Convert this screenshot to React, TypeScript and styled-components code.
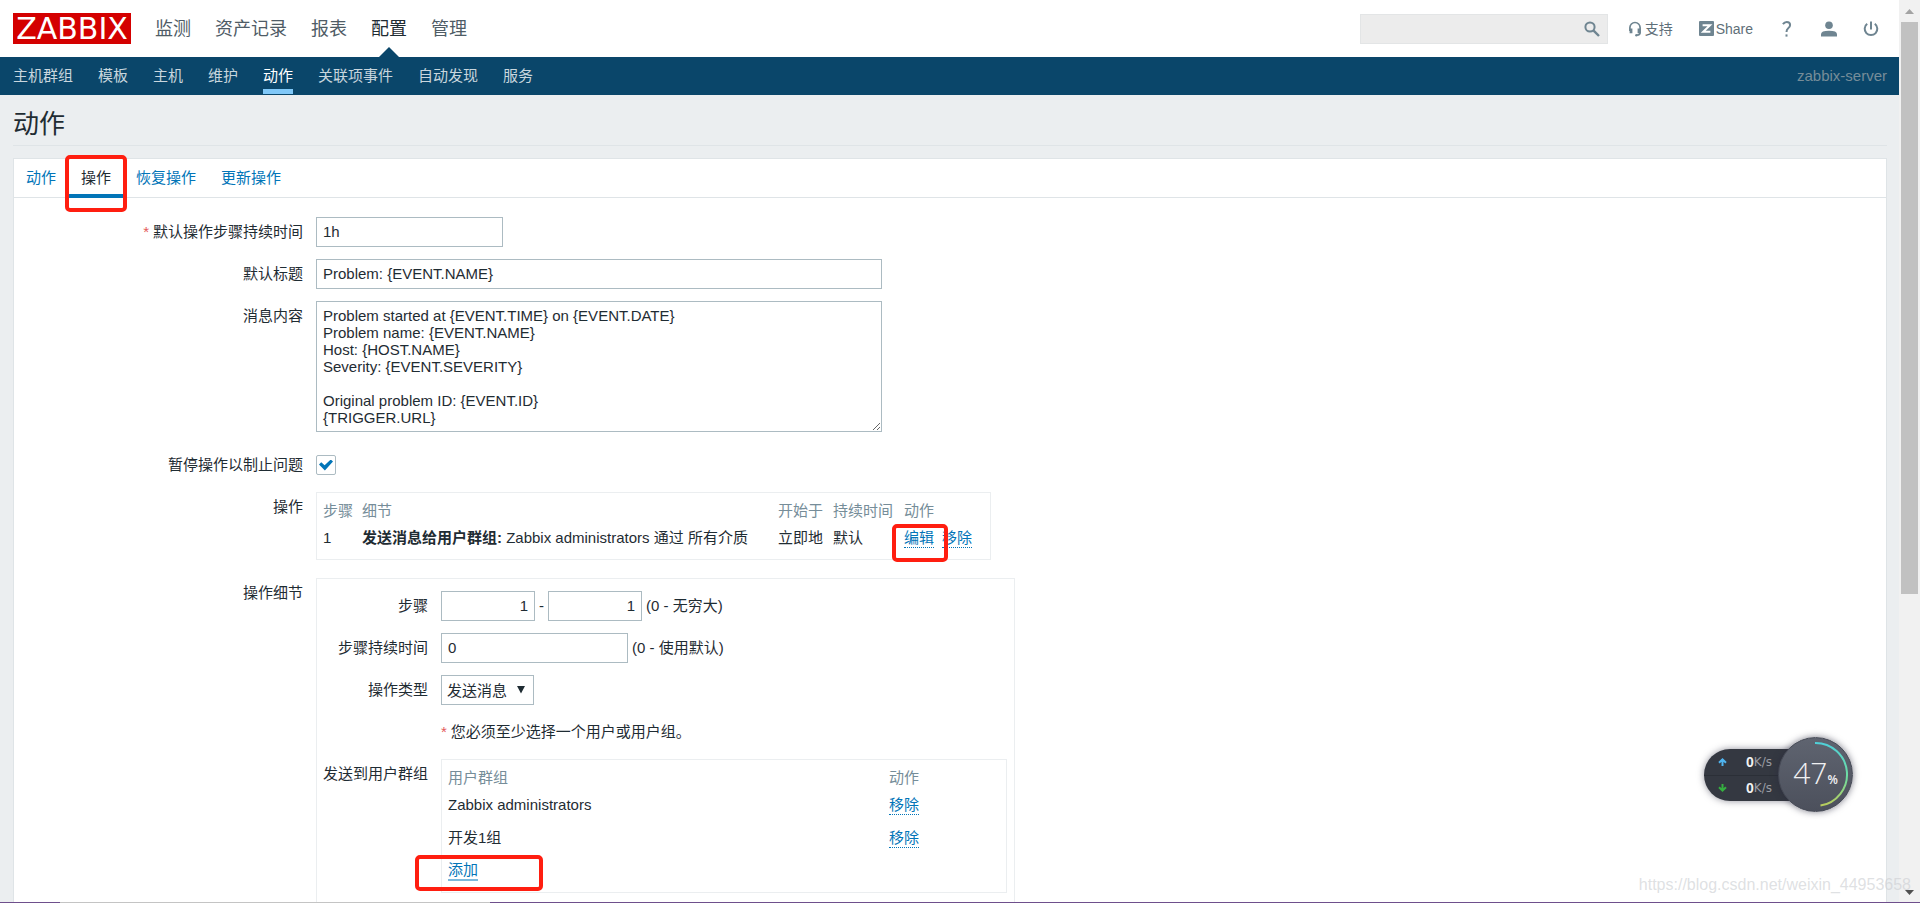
import React from "react";
import styled, { createGlobalStyle, css } from "styled-components";

const color = {
  text: "#1f2c33",
  muted: "#768d99",
  link: "#0275b8",
  nav: "#0a466a",
  page: "#ebeef0",
  line: "#dfe4e7",
  box: "#ebeef0",
  field: "#acbbc2",
  mark: "#ff1e10",
};

const GlobalStyle = createGlobalStyle`
  *, *::before, *::after { box-sizing: border-box; }
  body {
    margin: 0;
    background: ${color.page};
    color: ${color.text};
    font: 15px/20px "Liberation Sans", "Noto Sans CJK SC", sans-serif;
  }
  button, input, textarea, select { font: inherit; color: inherit; }
  a { color: inherit; text-decoration: none; }
  ul { margin: 0; padding: 0; list-style: none; }
`;

const Shell = styled.div`
  display: flex;
  height: 100vh;
  overflow: hidden;
  position: relative;
`;

const Page = styled.div`
  flex: 1;
  min-width: 0;
  display: flex;
  flex-direction: column;
`;

/* ---------- header ---------- */

const TopBar = styled.header`
  flex: none;
  display: flex;
  align-items: center;
  height: 57px;
  padding: 0 20px 0 13px;
  background: #fff;
`;

const Logo = styled.a`
  display: block;
  width: 118px;
  height: 31px;
  margin-right: 24px;
  background: #d40000;
  color: #fff;
  font: 30px/32px "DejaVu Sans", sans-serif;
  text-align: center;
`;

const MainMenu = styled.ul`
  display: flex;
  gap: 24px;
  flex: 1;
`;

const MainLink = styled.a<{ $active?: boolean }>`
  display: block;
  position: relative;
  height: 57px;
  font-size: 18px;
  line-height: 59px;
  color: ${(p) => (p.$active ? color.text : "#4f5c66")};
  ${(p) =>
    p.$active &&
    css`
      &::after {
        content: "";
        position: absolute;
        left: 50%;
        bottom: 0;
        margin-left: -10px;
        border: 10px solid transparent;
        border-top: 0;
        border-bottom-color: ${color.nav};
      }
    `}
`;

const Search = styled.form`
  display: flex;
  align-items: center;
  width: 248px;
  height: 30px;
  margin-right: 20px;
  padding-right: 7px;
  border: 1px solid #e3e5e6;
  background: #ececec;
`;

const SearchInput = styled.input`
  flex: 1;
  min-width: 0;
  border: 0;
  background: none;
  outline: 0;
`;

const IconButton = styled.button`
  display: flex;
  width: 16px;
  height: 16px;
  padding: 0;
  border: 0;
  background: none;
  color: #6f8591;
`;

const Tools = styled.div`
  display: flex;
  align-items: center;
  gap: 26px;
`;

const ToolLink = styled.a`
  display: flex;
  align-items: center;
  gap: 2px;
  font-size: 14px;
  color: #5f6f79;
`;

const SubBar = styled.nav`
  flex: none;
  display: flex;
  justify-content: space-between;
  height: 38px;
  padding: 0 12px 0 13px;
  background: ${color.nav};
  line-height: 38px;
`;

const SubMenu = styled.ul`
  display: flex;
  gap: 25px;
`;

const SubLink = styled.a<{ $active?: boolean }>`
  display: block;
  height: 37px;
  color: ${(p) => (p.$active ? "#fff" : "#c8d6de")};
  border-bottom: 5px solid ${(p) => (p.$active ? "#80c8f8" : "transparent")};
`;

const ServerName = styled.span`
  color: #768d99;
`;

/* ---------- content ---------- */

const Main = styled.main`
  flex: 1;
  display: flex;
  flex-direction: column;
  padding: 0 12px 0 13px;
`;

const Title = styled.h1`
  margin: 0 0 12px;
  height: 51px;
  border-bottom: 1px solid ${color.line};
  font-size: 26px;
  font-weight: 400;
  line-height: 58px;
`;

const Card = styled.section`
  flex: 1 0 auto;
  border: 1px solid ${color.line};
  background: #fff;
`;

const Tabs = styled.div`
  display: flex;
  height: 39px;
  border-bottom: 1px solid ${color.line};
`;

const Tab = styled.button<{ $active?: boolean }>`
  position: relative;
  height: 39px;
  padding: 3px 12px 0;
  border: 0;
  border-bottom: 4px solid ${(p) => (p.$active ? color.link : "transparent")};
  background: none;
  line-height: 32px;
  color: ${(p) => (p.$active ? color.text : color.link)};
  & + & {
    margin-left: 1px;
  }
`;

const Form = styled.form`
  padding-top: 19px;
`;

const Row = styled.div<{ $label: string; $loose?: boolean }>`
  display: grid;
  grid-template-columns: ${(p) => p.$label} minmax(0, 1fr);
  column-gap: 13px;
  min-height: 30px;
  margin-bottom: ${(p) => (p.$loose ? "18px" : "12px")};
`;

const Caption = styled.label`
  line-height: 30px;
  text-align: right;
`;

const Required = styled.span`
  color: #e45959;
  margin-right: 4px;
`;

const Controls = styled.div`
  display: flex;
  align-items: center;
  gap: 4px;
`;

const fieldStyle = css`
  border: 1px solid ${color.field};
  border-radius: 0;
  background: #fff;
  outline: 0;
`;

const TextInput = styled.input<{ $size: "step" | "short" | "wide" }>`
  ${fieldStyle}
  width: ${(p) => ({ step: "94px", short: "187px", wide: "566px" })[p.$size]};
  height: 30px;
  padding: 0 6px 2px;
  text-align: ${(p) => (p.$size === "step" ? "right" : "left")};
`;

const TextArea = styled.textarea`
  ${fieldStyle}
  display: block;
  width: 566px;
  height: 131px;
  padding: 5px 6px;
  line-height: 17px;
  overflow: hidden;
`;

const CheckBox = styled.input`
  appearance: none;
  display: grid;
  place-items: center;
  width: 20px;
  height: 20px;
  margin: 0;
  border: 1px solid ${color.field};
  border-radius: 2px;
  background: #fff;
  &:checked::before {
    content: "";
    width: 14px;
    height: 11px;
    background: ${color.link};
    clip-path: polygon(0 45%, 16% 26%, 40% 52%, 84% 0, 100% 18%, 42% 100%);
  }
`;

const SelectWrap = styled.span`
  position: relative;
  display: inline-block;
  svg {
    position: absolute;
    right: 9px;
    top: 11px;
    pointer-events: none;
  }
`;

const Select = styled.select`
  ${fieldStyle}
  appearance: none;
  display: block;
  width: 93px;
  height: 30px;
  padding: 2px 5px 0;
`;

const Box = styled.div<{ $width: string }>`
  width: ${(p) => p.$width};
  padding: 7px 6px 5px;
  border: 1px solid ${color.box};
`;

const DetailBox = styled.div`
  width: 699px;
  padding: 12px 7px 12px 0;
  border: 1px solid ${color.box};
`;

const Table = styled.table`
  width: 100%;
  table-layout: fixed;
  border-collapse: collapse;
  th,
  td {
    padding: 0;
    text-align: left;
    white-space: nowrap;
  }
  th {
    height: 21px;
    font-weight: 400;
    color: ${color.muted};
  }
  td {
    height: 33px;
  }
`;

const Action = styled.button<{ $focused?: boolean }>`
  position: relative;
  height: 20px;
  padding: 0;
  border: 0;
  border-bottom: ${(p) => (p.$focused ? "2px solid #7bb9dc" : `1px dotted ${color.link}`)};
  background: none;
  line-height: 17px;
  color: ${color.link};
  & + & {
    margin-left: 8px;
  }
`;

/* Red frame laid over the control that it points out. */
const Mark = styled.span<{ $inset: string }>`
  position: absolute;
  z-index: 2;
  inset: ${(p) => p.$inset};
  border: 4px solid ${color.mark};
  border-radius: 5px;
  pointer-events: none;
`;

/* ---------- window chrome and floating parts ---------- */

const ScrollBar = styled.div`
  flex: none;
  display: flex;
  flex-direction: column;
  align-items: center;
  width: 21px;
  background: #f1f1f1;
`;

const ScrollArrow = styled.button`
  display: grid;
  place-items: center;
  width: 17px;
  height: 22px;
  padding: 0;
  border: 0;
  background: none;
`;

const ScrollTrack = styled.div`
  flex: 1;
  width: 17px;
`;

const ScrollThumb = styled.div`
  height: 66.6%;
  background: #c1c1c1;
`;

const Meter = styled.aside`
  position: absolute;
  z-index: 3;
  right: 67px;
  bottom: 91px;
  display: flex;
  align-items: center;
`;

const Rates = styled.div`
  width: 112px;
  height: 52px;
  margin-right: -38px;
  border-radius: 26px 0 0 26px;
  background: #343841;
  box-shadow: 0 0 7px rgba(40, 40, 60, 0.5);
`;

const Rate = styled.div`
  display: flex;
  align-items: center;
  height: 26px;
  padding-left: 14px;
  font: 12px/26px "DejaVu Sans", sans-serif;
  color: #9a9ca3;
  & + & {
    border-top: 1px solid #2b2f37;
  }
  svg {
    margin-right: 19px;
  }
  b {
    font: 700 14px/26px "Liberation Sans", sans-serif;
    color: #f2f2f2;
  }
`;

const Dial = styled.div`
  position: relative;
  display: flex;
  align-items: baseline;
  justify-content: center;
  width: 75px;
  height: 75px;
  border-radius: 50%;
  background: linear-gradient(#5f6470, #4c505c);
  border: 1px solid #454955;
  box-shadow: 0 0 7px rgba(40, 40, 60, 0.6);
  color: #f0f0f2;
  font: 300 30px/70px "Open Sans", "Noto Sans", sans-serif;
  small {
    font-size: 12px;
    font-weight: 600;
  }
  svg {
    position: absolute;
    inset: -1px;
  }
`;

const Watermark = styled.span`
  position: absolute;
  z-index: 3;
  right: 9px;
  bottom: 8px;
  font-size: 16px;
  color: rgba(205, 207, 211, 0.65);
`;

const TaskEdge = styled.div`
  position: absolute;
  z-index: 4;
  left: 0;
  right: 0;
  bottom: 0;
  height: 1px;
  background: linear-gradient(90deg, #6e4f8c 60px, #c4c4c4 60px, #c4c4c4 490px, #6e4f8c 490px);
`;

const outer = "289px";
const inner = "111px";

const mainMenu = ["监测", "资产记录", "报表", "配置", "管理"];
const subMenu = ["主机群组", "模板", "主机", "维护", "动作", "关联项事件", "自动发现", "服务"];
const tabs = ["动作", "操作", "恢复操作", "更新操作"];
const groups = ["Zabbix administrators", "开发1组"];

const message = `Problem started at {EVENT.TIME} on {EVENT.DATE}
Problem name: {EVENT.NAME}
Host: {HOST.NAME}
Severity: {EVENT.SEVERITY}

Original problem ID: {EVENT.ID}
{TRIGGER.URL}`;

function Header() {
  return (
    <>
      <TopBar>
        <Logo href="#">ZABBIX</Logo>
        <MainMenu>
          {mainMenu.map((t) => (
            <li key={t}>
              <MainLink href="#" $active={t === "配置"}>{t}</MainLink>
            </li>
          ))}
        </MainMenu>
        <Search>
          <SearchInput type="text" aria-label="搜索" />
          <IconButton type="button" aria-label="搜索">
            <svg width="16" height="16" viewBox="0 0 16 16" fill="none" stroke="currentColor">
              <circle cx="6" cy="6" r="4.6" strokeWidth="2" />
              <path d="M9.6 9.6L15 15" strokeWidth="2.4" />
            </svg>
          </IconButton>
        </Search>
        <Tools>
          <ToolLink href="#">
            <svg width="15" height="16" viewBox="0 0 15 16" fill="none" stroke="#6f8591">
              <path d="M1.9 10V6.6a5.1 5.1 0 0 1 10.2 0v5.2q0 2.2-3 2.4" strokeWidth="1.7" />
              <path d="M3 7.4v4.8M11 7.4v4.8" strokeWidth="2.8" />
              <circle cx="8.4" cy="14.2" r="1.2" fill="#6f8591" stroke="none" />
            </svg>
            支持
          </ToolLink>
          <ToolLink href="#">
            <svg width="15" height="15" viewBox="0 0 15 15">
              <rect width="15" height="15" rx="1" fill="#6f8591" />
              <path d="M3.6 4.2H11L4.2 10.8h7.2" fill="none" stroke="#fff" strokeWidth="2" />
            </svg>
            Share
          </ToolLink>
          <IconButton aria-label="帮助">
            <svg width="16" height="16" viewBox="0 0 16 16" fill="none" stroke="currentColor">
              <path d="M3.900 3.200Q5.500 1 7.700 1q3.400 0 3.400 3 0 1.800-1.900 3.200Q7.500 8.500 7.500 10.900" strokeWidth="2" />
              <rect x="6.500" y="13.400" width="2" height="2.200" fill="currentColor" stroke="none" />
            </svg>
          </IconButton>
          <IconButton aria-label="用户">
            <svg width="16" height="16" viewBox="0 0 16 16" fill="currentColor">
              <circle cx="8" cy="4.200" r="3.800" />
              <path d="M0 15.500v-2.300Q0 9.800 8 9.800t8 3.400v2.300z" />
            </svg>
          </IconButton>
          <IconButton aria-label="退出">
            <svg width="16" height="16" viewBox="0 0 16 16" fill="none" stroke="currentColor" strokeWidth="2">
              <path d="M4.200 2.800a6.300 6.300 0 1 0 7.600 0M8 0.500v8" />
            </svg>
          </IconButton>
        </Tools>
      </TopBar>
      <SubBar>
        <SubMenu>
          {subMenu.map((t) => (
            <li key={t}>
              <SubLink href="#" $active={t === "动作"}>{t}</SubLink>
            </li>
          ))}
        </SubMenu>
        <ServerName>zabbix-server</ServerName>
      </SubBar>
    </>
  );
}

function OperationsTable() {
  return (
    <Box $width="675px">
      <Table>
        <colgroup>
          <col width="39" />
          <col width="416" />
          <col width="55" />
          <col width="71" />
          <col />
        </colgroup>
        <thead>
          <tr>
            <th>步骤</th>
            <th>细节</th>
            <th>开始于</th>
            <th>持续时间</th>
            <th>动作</th>
          </tr>
        </thead>
        <tbody>
          <tr>
            <td>1</td>
            <td><b>发送消息给用户群组:</b> Zabbix administrators 通过 所有介质</td>
            <td>立即地</td>
            <td>默认</td>
            <td>
              <Action type="button">
                编辑
                <Mark $inset="-4px -14px -15px -12px" />
              </Action>
              <Action type="button">移除</Action>
            </td>
          </tr>
        </tbody>
      </Table>
    </Box>
  );
}

function OperationDetails() {
  return (
    <DetailBox>
      <Row $label={inner}>
        <Caption htmlFor="step-from">步骤</Caption>
        <Controls>
          <TextInput id="step-from" $size="step" defaultValue="1" />-
          <TextInput aria-label="步骤至" $size="step" defaultValue="1" />
          <span>(0 - 无穷大)</span>
        </Controls>
      </Row>
      <Row $label={inner}>
        <Caption htmlFor="step-duration">步骤持续时间</Caption>
        <Controls>
          <TextInput id="step-duration" $size="short" defaultValue="0" />
          <span>(0 - 使用默认)</span>
        </Controls>
      </Row>
      <Row $label={inner}>
        <Caption htmlFor="op-type">操作类型</Caption>
        <Controls>
          <SelectWrap>
            <Select id="op-type">
              <option>发送消息</option>
            </Select>
            <svg width="8" height="8" viewBox="0 0 8 8">
              <path d="M0 0h8L4 7.500z" fill={color.text} />
            </svg>
          </SelectWrap>
        </Controls>
      </Row>
      <Row $label={inner}>
        <span />
        <Controls>
          <span><Required>*</Required>您必须至少选择一个用户或用户组。</span>
        </Controls>
      </Row>
      <Row $label={inner}>
        <Caption as="span">发送到用户群组</Caption>
        <Box $width="auto">
          <Table>
            <colgroup>
              <col width="441" />
              <col />
            </colgroup>
            <thead>
              <tr>
                <th>用户群组</th>
                <th>动作</th>
              </tr>
            </thead>
            <tbody>
              {groups.map((g) => (
                <tr key={g}>
                  <td>{g}</td>
                  <td><Action type="button">移除</Action></td>
                </tr>
              ))}
              <tr>
                <td colSpan={2}>
                  <Action type="button" $focused>
                    添加
                    <Mark $inset="-6px -65px -12px -33px" />
                  </Action>
                </td>
              </tr>
            </tbody>
          </Table>
        </Box>
      </Row>
    </DetailBox>
  );
}

function LoadMeter() {
  return (
    <Meter>
      <Rates>
        <Rate>
          <svg width="9" height="8" viewBox="0 0 9 8" fill="none" stroke="#4fb4f0" strokeWidth="2">
            <path d="M4.500 8V1.500M1 4.800L4.500 1.400 8 4.800" />
          </svg>
          <b>0</b>K/s
        </Rate>
        <Rate>
          <svg width="9" height="8" viewBox="0 0 9 8" fill="none" stroke="#35b040" strokeWidth="2">
            <path d="M4.500 0v6.500M1 3.200l3.500 3.400L8 3.200" />
          </svg>
          <b>0</b>K/s
        </Rate>
      </Rates>
      <Dial>
        47<small>%</small>
        <svg width="75" height="75" viewBox="0 0 75 75" fill="none">
          <defs>
            <linearGradient id="arc" x1="0" y1="0" x2="0" y2="1">
              <stop offset="0" stopColor="#4fd0d8" />
              <stop offset="0.550" stopColor="#6fdca0" />
              <stop offset="1" stopColor="#b8cc5c" />
            </linearGradient>
          </defs>
          <path d="M37 6A31.500 31.500 0 0 1 42.500 68.600" stroke="url(#arc)" strokeWidth="2" />
        </svg>
      </Dial>
    </Meter>
  );
}

export default function App() {
  return (
    <Shell>
      <GlobalStyle />
      <Page>
        <Header />
        <Main>
          <Title>动作</Title>
          <Card>
            <Tabs role="tablist">
              {tabs.map((t) => (
                <Tab key={t} type="button" role="tab" aria-selected={t === "操作"} $active={t === "操作"}>
                  {t}
                  {t === "操作" && <Mark $inset="-4px -4px -18px -4px" />}
                </Tab>
              ))}
            </Tabs>
            <Form>
              <Row $label={outer}>
                <Caption htmlFor="duration"><Required>*</Required>默认操作步骤持续时间</Caption>
                <TextInput id="duration" $size="short" defaultValue="1h" />
              </Row>
              <Row $label={outer}>
                <Caption htmlFor="subject">默认标题</Caption>
                <TextInput id="subject" $size="wide" defaultValue="Problem: {EVENT.NAME}" />
              </Row>
              <Row $label={outer} $loose>
                <Caption htmlFor="message">消息内容</Caption>
                <TextArea id="message" defaultValue={message} />
              </Row>
              <Row $label={outer}>
                <Caption htmlFor="pause">暂停操作以制止问题</Caption>
                <Controls>
                  <CheckBox id="pause" type="checkbox" defaultChecked />
                </Controls>
              </Row>
              <Row $label={outer} $loose>
                <Caption as="span">操作</Caption>
                <OperationsTable />
              </Row>
              <Row $label={outer}>
                <Caption as="span">操作细节</Caption>
                <OperationDetails />
              </Row>
            </Form>
          </Card>
        </Main>
      </Page>
      <ScrollBar>
        <ScrollArrow aria-label="向上滚动">
          <svg width="9" height="5" viewBox="0 0 9 5"><path d="M0 5L4.500 0 9 5z" fill="#a3a3a3" /></svg>
        </ScrollArrow>
        <ScrollTrack>
          <ScrollThumb />
        </ScrollTrack>
        <ScrollArrow aria-label="向下滚动">
          <svg width="9" height="5" viewBox="0 0 9 5"><path d="M0 0L4.500 5 9 0z" fill="#505050" /></svg>
        </ScrollArrow>
      </ScrollBar>
      <LoadMeter />
      <Watermark>https://blog.csdn.net/weixin_44953658</Watermark>
      <TaskEdge />
    </Shell>
  );
}
